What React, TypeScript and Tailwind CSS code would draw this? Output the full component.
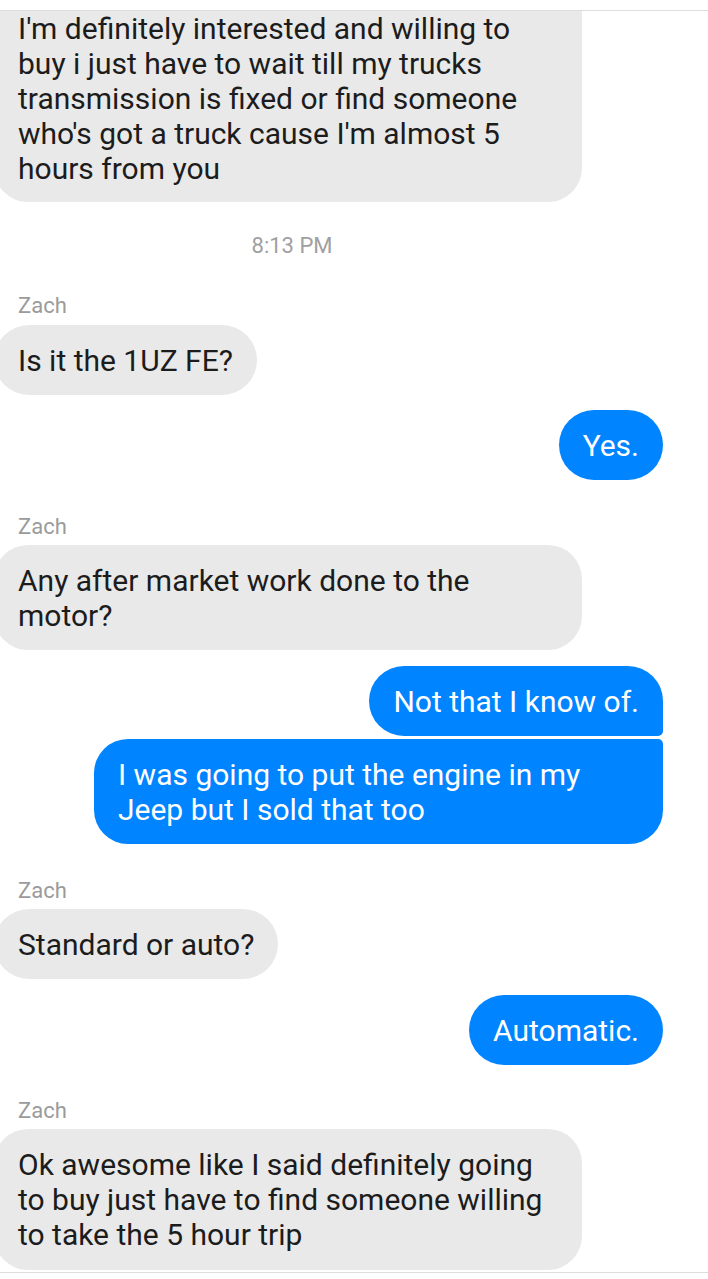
import React from "react";

const font = { fontFamily: "Roboto, 'Noto Sans', sans-serif" };

function Name() {
  return <div className="pl-[18px] text-[22px] leading-[26px] text-[#9b9b9b]">Zach</div>;
}

const grayText = "text-[30px] leading-[35px] text-[#1c1c1c]";
const blueText = "text-[30px] leading-[35px] text-white";

export default function App() {
  return (
    <div className="w-[708px] h-[1279px] bg-white overflow-hidden flex flex-col" style={font}>
      <div className="h-[11px] border-b border-[#dddddd] shrink-0" />
      {/* first bubble, cut off at top */}
      <div className={`ml-[-6px] w-[588px] bg-[#e9e9e9] rounded-b-[34px] px-[24px] pt-0 pb-[16px] ${grayText}`}>
        I'm definitely interested and willing to buy i just have to wait till my trucks transmission is fixed or find someone who's got a truck cause I'm almost 5 hours from you
      </div>
      <div className="mt-[31px] w-[584px] text-center text-[22px] leading-[26px] text-[#a0a0a0]">8:13 PM</div>
      <div className="mt-[34px]"><Name /></div>
      <div className="mt-[6px] flex">
        <div className={`ml-[-6px] bg-[#e9e9e9] rounded-full px-[24px] py-[17.5px] ${grayText}`}>Is it the 1UZ FE?</div>
      </div>
      <div className="mt-[15px] flex justify-end pr-[45px]">
        <div className={`bg-[#0084ff] rounded-full px-[24px] py-[17.5px] ${blueText}`}>Yes.</div>
      </div>
      <div className="mt-[34px]"><Name /></div>
      <div className="mt-[5px] flex">
        <div className={`ml-[-6px] w-[588px] bg-[#e9e9e9] rounded-[34px] px-[24px] py-[17.5px] ${grayText}`}>Any after market work done to the motor?</div>
      </div>
      <div className="mt-[16px] flex flex-col items-end gap-[3px] pr-[45px]">
        <div className={`bg-[#0084ff] rounded-[35px] rounded-br-[5px] px-[24px] py-[17.5px] ${blueText}`}>Not that I know of.</div>
        <div className={`w-[569px] bg-[#0084ff] rounded-[34px] rounded-tr-[5px] px-[24px] py-[17.5px] ${blueText}`}>I was going to put the engine in my Jeep but I sold that too</div>
      </div>
      <div className="mt-[34px]"><Name /></div>
      <div className="mt-[5px] flex">
        <div className={`ml-[-6px] bg-[#e9e9e9] rounded-full px-[24px] py-[17.5px] ${grayText}`}>Standard or auto?</div>
      </div>
      <div className="mt-[16px] flex justify-end pr-[45px]">
        <div className={`bg-[#0084ff] rounded-full px-[24px] py-[17.5px] ${blueText}`}>Automatic.</div>
      </div>
      <div className="mt-[33px]"><Name /></div>
      <div className="mt-[5px] flex">
        <div className={`ml-[-6px] w-[588px] bg-[#e9e9e9] rounded-[34px] px-[24px] py-[18px] ${grayText}`}>Ok awesome like I said definitely going to buy just have to find someone willing to take the 5 hour trip</div>
      </div>
      <div className="mt-[2px] border-t border-[#dddddd]" />
    </div>
  );
}
